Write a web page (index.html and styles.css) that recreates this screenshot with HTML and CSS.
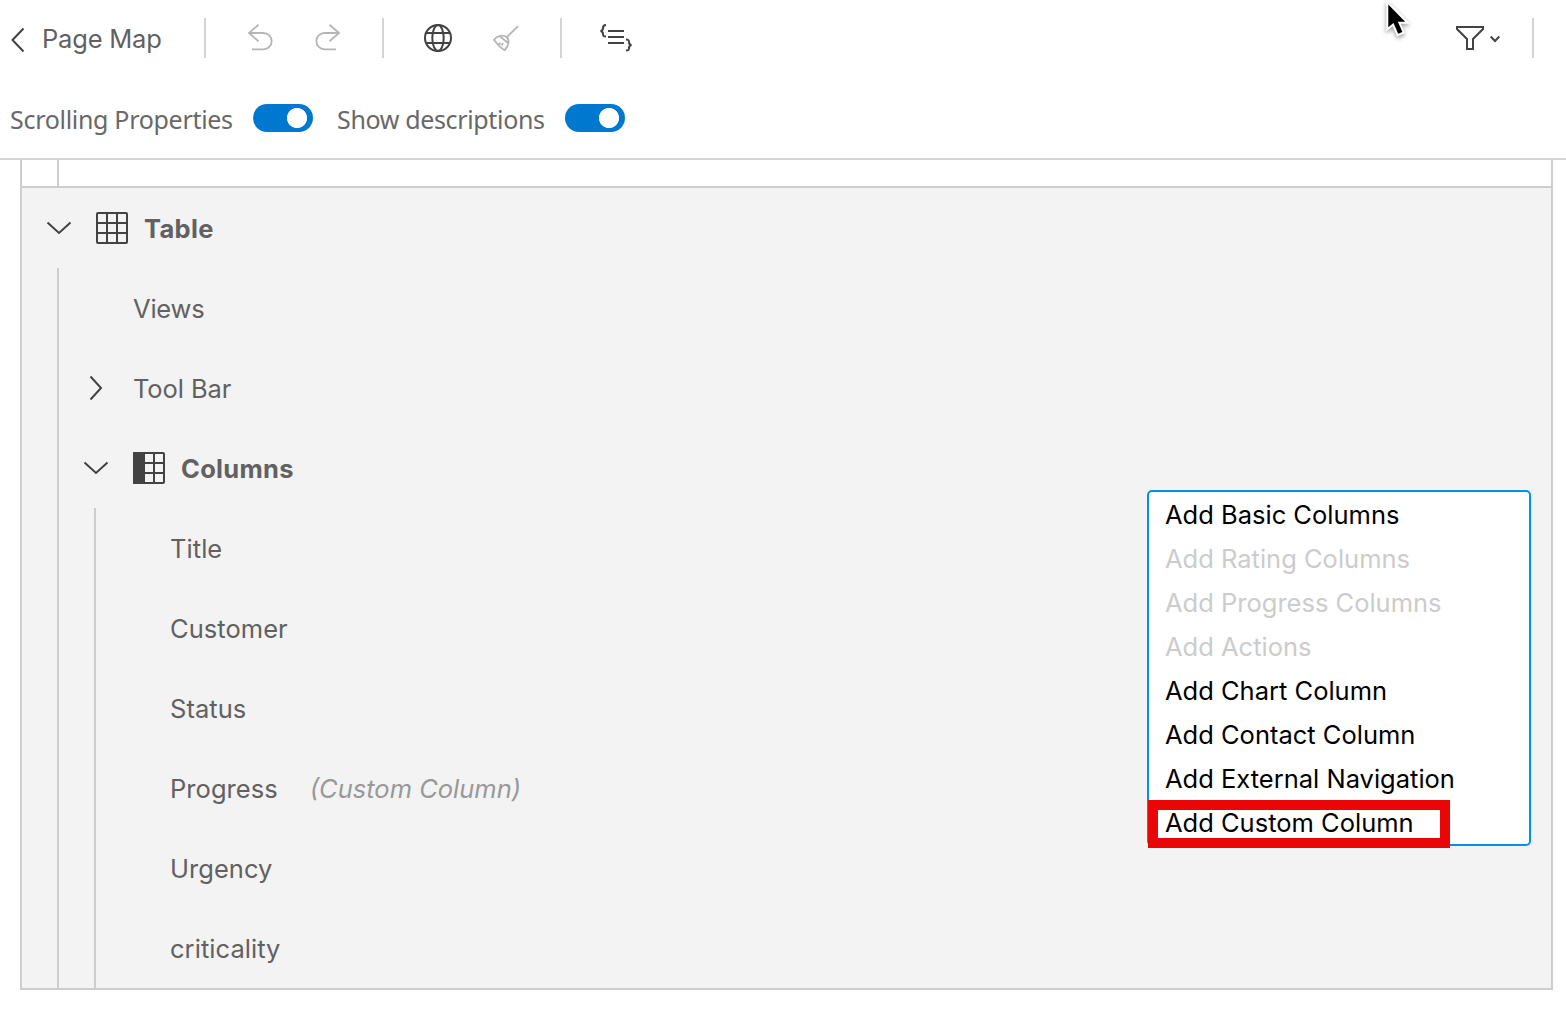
FILE: index.html
```html
<!DOCTYPE html>
<html lang="en">
<head>
<meta charset="utf-8">
<title>Page Map</title>
<link rel="stylesheet" href="styles.css">
</head>
<body>
<header class="header">
  <div class="toolbar">
    <div class="toolbar-left">
      <svg class="icon back" viewBox="0 0 16 28"><path d="M13.500 2.500 2.500 14l11 11.500"/></svg>
      <span class="page-title">Page Map</span>
      <span class="separator sep-title"></span>
      <svg class="icon undo faded" viewBox="0 0 28 28"><path d="M11.500 .700 2 9 11.500 17.300M2 9h14.500a8 8 0 0 1 0 16.300H5"/></svg>
      <svg class="icon redo faded" viewBox="0 0 28 28"><path d="M15.500 .700 25 9 15.500 17.300M25 9H10.500A8 8 0 0 0 10.500 25.300h11.500"/></svg>
      <span class="separator sep-history"></span>
      <svg class="icon globe" viewBox="0 0 28 28"><circle cx="14" cy="14" r="13"/><ellipse cx="14" cy="14" rx="5.700" ry="13"/><path d="M2.500 9h23M2.500 19h23"/></svg>
      <svg class="icon broom faded" viewBox="0 0 28 28"><path d="M26 2.200 15 13"/><path d="M2 15.800C5 11.500 11.500 10.500 14.500 13s3 7.500-1.800 13.200Q7.500 23.500 2 15.800ZM8.500 12.800l7.500 6.200M6.500 20.500l2-1.500M9.500 21.500 11 19"/></svg>
      <span class="separator sep-tools"></span>
      <svg class="icon code" viewBox="0 0 34 28"><path d="M7 1C4.500 1 4 2 4 4c0 2-.5 2.700-2.500 3C3.500 7.300 4 8 4 10c0 2 .5 2.500 3 2.500M9 7h16M9 13h16M9 19h16M27 15.500c2.500 0 3 .5 3 2.500s.5 2.700 2.500 3c-2 .3-2.500 1-2.500 3s-.5 2.500-3 2.500"/></svg>
    </div>
    <div class="toolbar-right">
      <svg class="icon filter" viewBox="0 0 28 26"><path d="M1 2h26v2L17 14v10h-6V14L1 4Z"/></svg>
      <svg class="icon filter-arrow" viewBox="0 0 10 8"><path d="M.7 1.500 5 6l4.300-4.500"/></svg>
      <span class="separator"></span>
    </div>
  </div>
  <div class="options">
    <span class="option-label label-scroll">Scrolling Properties</span>
    <span class="switch"></span>
    <span class="option-label label-desc">Show descriptions</span>
    <span class="switch"></span>
  </div>
</header>
<main class="outline">
  <div class="previous"></div>
  <section class="tree">
    <div class="row row-table">
      <svg class="icon chevron" viewBox="0 0 26 14"><path d="M1.500 1.500 13 12 24.500 1.500"/></svg>
      <svg class="icon grid" viewBox="0 0 32 32"><rect x="1" y="1" width="30" height="30" rx="1"/><path d="M11 1v30M21 1v30M1 11h30M1 21h30"/></svg>
      <span class="heading">Table</span>
    </div>
    <div class="branch">
      <div class="row leaf views"><span>Views</span></div>
      <div class="row row-toolbar">
        <svg class="icon chevron-right" viewBox="0 0 14 26"><path d="M1.500 1.500 12 13 1.500 24.500"/></svg>
        <span>Tool Bar</span>
      </div>
      <div class="row row-columns">
        <svg class="icon chevron" viewBox="0 0 26 14"><path d="M1.500 1.500 13 12 24.500 1.500"/></svg>
        <svg class="icon grid" viewBox="0 0 32 32"><rect x="1" y="1" width="30" height="30" rx="1"/><path class="solid" d="M1 1h10v30H1Z"/><path d="M21 1v30M11 11h20M11 21h20"/></svg>
        <span class="heading">Columns</span>
      </div>
      <div class="branch columns">
        <div class="row leaf"><span>Title</span></div>
        <div class="row leaf"><span>Customer</span></div>
        <div class="row leaf"><span>Status</span></div>
        <div class="row leaf"><span>Progress</span><em class="note">(Custom Column)</em></div>
        <div class="row leaf"><span>Urgency</span></div>
        <div class="row leaf"><span>criticality</span></div>
      </div>
    </div>
  </section>
</main>
<ul class="menu">
  <li>Add Basic Columns</li>
  <li class="disabled">Add Rating Columns</li>
  <li class="disabled">Add Progress Columns</li>
  <li class="disabled">Add Actions</li>
  <li>Add Chart Column</li>
  <li>Add Contact Column</li>
  <li>Add External Navigation</li>
  <li>Add Custom Column</li>
</ul>
<div class="highlight"></div>
<svg class="cursor" viewBox="0 0 26 38"><path d="M3.300 3.500v22.800l5.200-4.300 4.700 10.800 4.200-1.800-4.500-10.300h7.300Z"/></svg>
</body>
</html>
```
FILE: styles.css
```css
* { box-sizing: border-box; }
body {
  margin: 0;
  height: 1014px;
  overflow: hidden;
  position: relative;
  background: #fff;
  color: #616161;
  font: 25.5px/36px Inter, "Liberation Sans", sans-serif;
  white-space: nowrap;
}
.header { height: 160px; border-bottom: 2px solid #d4d4d4; }
.toolbar { height: 76px; display: flex; justify-content: space-between; }
.toolbar-left, .toolbar-right { display: flex; align-items: center; }
.icon { flex: none; fill: none; stroke: #424242; stroke-width: 2; }
.icon.faded { stroke: #b5b5b5; stroke-width: 1.8; }
.solid { fill: #424242; }
.back { width: 16px; height: 28px; margin: 4px 0 0 10px; }
.page-title { width: 120px; margin: 2px 0 0 16px; letter-spacing: -.2px; }
.separator { width: 2px; height: 40px; background: #d4d4d4; flex: none; }
.sep-title { margin-left: 42px; }
.undo { width: 28px; height: 28px; margin-left: 41px; }
.redo { width: 28px; height: 28px; margin-left: 39px; }
.sep-history { margin-left: 40px; }
.globe { width: 28px; height: 28px; margin-left: 40px; }
.broom { width: 28px; height: 28px; margin-left: 40px; }
.sep-tools { margin-left: 40px; }
.code { width: 34px; height: 28px; margin-left: 37px; }
.filter { width: 28px; height: 26px; }
.filter-arrow { width: 10px; height: 8px; margin: 2px 32px 0 6px; }
.toolbar-right { padding-right: 32px; }
.options {
  height: 82px;
  padding: 2px 0 0 10px;
  display: flex;
  align-items: center;
  font-family: "Noto Sans", sans-serif;
  font-size: 25px;
  color: #686868;
}
.option-label { margin-top: 2px; }
.label-scroll { width: 243px; letter-spacing: -.3px; }
.label-desc { width: 228px; margin-left: 24px; letter-spacing: -.35px; }
.switch {
  width: 60px;
  height: 28px;
  border-radius: 14px;
  background: radial-gradient(circle at 44px 14px, #fff 9.7px, #0078d0 10.4px);
}
.outline {
  width: 1533px;
  height: 830px;
  margin-left: 20px;
  border: solid #cdcdcd;
  border-width: 0 2px 2px;
}
.previous { height: 26px; margin-left: 35px; border-left: 2px solid #cdcdcd; }
.tree {
  height: 802px;
  background: #f3f3f3;
  border-top: 2px solid #cdcdcd;
}
.branch { margin-left: 35px; border-left: 2px solid #cdcdcd; }
.row { height: 80px; display: flex; align-items: center; }
.row > span, .note { padding-top: 2px; }
.row-table, .row-columns { padding-left: 24px; }
.chevron { width: 26px; height: 14px; }
.grid { width: 32px; height: 32px; margin: 0 16px 0 24px; }
.row-toolbar { padding-left: 30px; letter-spacing: -.1px; }
.chevron-right { width: 14px; height: 26px; margin-right: 30px; }
.leaf { padding-left: 74px; }
.views { letter-spacing: -.2px; }
.columns { letter-spacing: .05px; }
.heading { font-weight: 700; letter-spacing: .3px; }
.note { margin-left: 32px; color: #999; letter-spacing: 0; }
.menu {
  position: absolute;
  left: 1147px;
  top: 490px;
  width: 384px;
  height: 356px;
  margin: 0;
  padding: 0 16px;
  list-style: none;
  border: 2px solid #0090ee;
  border-radius: 5px;
  background: #fff;
  color: #000;
}
.menu li { height: 44px; line-height: 46px; }
.menu .disabled { color: #ccc; }
.highlight {
  position: absolute;
  left: 1148px;
  top: 800px;
  width: 302px;
  height: 48px;
  border: 10px solid #ea0606;
}
.cursor {
  position: absolute;
  left: 1385px;
  top: 1px;
  width: 26px;
  height: 38px;
  overflow: visible;
  fill: #000;
  stroke: #fff;
  stroke-width: 4;
  paint-order: stroke;
  filter: drop-shadow(0 2px 2px rgba(0, 0, 0, .4));
}
```
